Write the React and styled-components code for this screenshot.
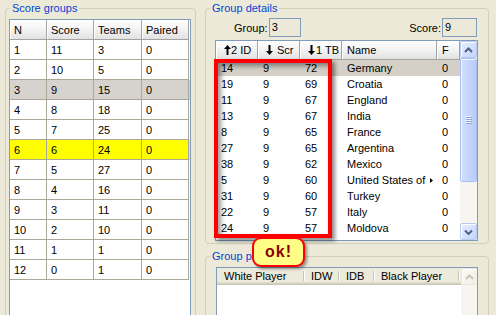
import React from 'react'
import styled, { createGlobalStyle } from 'styled-components'

const GlobalStyle = createGlobalStyle`
  html, body { margin: 0; padding: 0; background: #ECE9D8; }
  body { font-family: "Liberation Sans", Arial, sans-serif; font-size: 11px; color: #000; }
`

const Window = styled.div`
  position: relative;
  width: 496px;
  height: 315px;
  overflow: hidden;
  background: #ECE9D8;
  display: flex;
  align-items: flex-start;
`

const GroupBox = styled.fieldset`
  margin: ${p => p.$mt || 0}px 0 0 0;
  width: ${p => p.$w}px;
  height: ${p => p.$h}px;
  box-sizing: border-box;
  padding: ${p => p.$pad};
  border: 1px solid #D0D0BF;
  border-radius: 4px;
  min-width: 0;
  flex-shrink: 0;
`

const Legend = styled.legend`
  padding: 0 2px;
  margin-left: ${p => p.$offset || 0}px;
  color: #0046D5;
  font-size: 11px;
  line-height: 13px;
`

const LeftColumn = styled.div`
  margin-left: 5px;
`

const RightColumn = styled.div`
  margin-left: 9px;
  width: 284px;
  display: flex;
  flex-direction: column;
`

const Body = styled.div`
  padding: 0 ${p => p.$right}px 0 ${p => p.$left}px;
`

const InfoRow = styled.div`
  display: flex;
  justify-content: space-between;
  align-items: center;
  height: 19px;
  padding: 0 1px 0 19px;
  margin-bottom: 3px;
`

const Field = styled.div`
  display: flex;
  align-items: center;
  gap: 1px;
`

const ValueBox = styled.div`
  width: ${p => p.$w}px;
  height: 19px;
  box-sizing: border-box;
  border: 1px solid #7F9DB9;
  padding-left: 2px;
  line-height: 17px;
`

const ListView = styled.div`
  display: flex;
  width: ${p => p.$w}px;
  height: ${p => p.$h}px;
  box-sizing: border-box;
  border: 1px solid #7F9DB9;
  background: #fff;
  overflow: hidden;
`

const Table = styled.div`
  width: ${p => p.$w}px;
  flex-shrink: 0;
  overflow: hidden;
`

const GridRow = styled.div`
  display: grid;
  grid-template-columns: ${p => p.$cols};
  height: ${p => p.$h}px;
  background: ${p => p.$bg || 'transparent'};
`

const HeadCell = styled.div`
  display: flex;
  align-items: center;
  padding-left: ${p => p.$pad || 4}px;
  box-sizing: border-box;
  background: linear-gradient(#FFFFFF, #F4F4F4 45%, #E2E2E2);
  border-right: 1px solid #A3A3A3;
  border-bottom: 1px solid #A3A3A3;
  box-shadow: inset 1px 1px 0 #FFFFFF;
  white-space: nowrap;
`

const GridCell = styled.div`
  display: flex;
  align-items: center;
  padding-left: 4px;
  box-sizing: border-box;
  border-right: 1px solid #ACA899;
  border-bottom: 1px solid #ACA899;
`

const Cell = styled.div`
  display: flex;
  align-items: center;
  padding-left: 5px;
  white-space: nowrap;
  overflow: hidden;
`

const SortIcon = styled.svg`
  margin-left: 3px;
  margin-right: ${p => p.$gap || 0}px;
`

const MoreMark = styled.svg`
  margin-left: 5px;
`

const FlatHead = styled.div`
  display: grid;
  grid-template-columns: 87px 35px 35px 85px;
  height: 17px;
  background: linear-gradient(#EBEADB 0, #EBEADB 14px, #E2DECD 14px, #E2DECD 15px, #D6D2C2 15px, #D6D2C2 16px, #CBC7B8 16px);
`

const FlatHeadCell = styled.div`
  position: relative;
  padding-left: 7px;
  line-height: 16px;
  white-space: nowrap;
  &::after {
    content: '';
    position: absolute;
    right: 0;
    top: 3px;
    bottom: 4px;
    width: 1px;
    background: #C7C5B2;
    box-shadow: 1px 0 0 #FFFFFF;
  }
`

const ScrollBar = styled.div`
  width: 17px;
  flex-shrink: 0;
  margin-left: ${p => p.$ml || 0}px;
  display: flex;
  flex-direction: column;
  background: #F6F5F0;
`

const ScrollButton = styled.div`
  height: 17px;
  flex: none;
  box-sizing: border-box;
  display: flex;
  align-items: center;
  justify-content: center;
  border-radius: 2px;
  border: 1px solid ${p => (p.$disabled ? '#E8E6DD' : '#B7CBF5')};
  background: ${p => (p.$disabled
    ? 'linear-gradient(135deg, #FBFBF8, #EEEDE5)'
    : 'linear-gradient(135deg, #E6EEFF, #C3D4FC)')};
  box-shadow: inset 1px 1px 0 #FFFFFF;
`

const Thumb = styled.div`
  height: ${p => p.$h}px;
  flex: none;
  box-sizing: border-box;
  display: flex;
  align-items: center;
  justify-content: center;
  border-radius: 2px;
  border: 1px solid #A9BFF3;
  background: linear-gradient(90deg, #D2DEFD, #C2D3FC 60%, #B9CCFA);
  box-shadow: inset 1px 1px 0 #F2F6FF;
`

const Track = styled.div`
  flex: 1;
`

const Marker = styled.div`
  position: absolute;
  left: 214px;
  top: 59px;
  width: 118px;
  height: 179px;
  box-sizing: border-box;
  border: 4px solid #FF0000;
  box-shadow: 3px 3px 4px rgba(0, 0, 0, 0.45), inset 3px 3px 5px rgba(0, 0, 0, 0.4);
`

const Bubble = styled.div`
  position: absolute;
  left: 252px;
  top: 237px;
  width: 53px;
  height: 30px;
  box-sizing: border-box;
  border: 2px solid #FF0000;
  border-radius: 9px;
  background: #FFFF88;
  box-shadow: 2px 2px 3px rgba(0, 0, 0, 0.4);
  display: flex;
  align-items: center;
  justify-content: center;
  color: #8B0000;
  font-weight: bold;
  font-size: 16px;
  letter-spacing: 1px;
`

const scoreGroups = [
  [1, 11, 3, 0], [2, 10, 5, 0], [3, 9, 15, 0], [4, 8, 18, 0],
  [5, 7, 25, 0], [6, 6, 24, 0], [7, 5, 27, 0], [8, 4, 16, 0],
  [9, 3, 11, 0], [10, 2, 10, 0], [11, 1, 1, 0], [12, 0, 1, 0],
]

const teams = [
  [14, 9, 72, 'Germany'], [19, 9, 69, 'Croatia'], [11, 9, 67, 'England'],
  [13, 9, 67, 'India'], [8, 9, 65, 'France'], [27, 9, 65, 'Argentina'],
  [38, 9, 62, 'Mexico'], [5, 9, 60, 'United States of'], [31, 9, 60, 'Turkey'],
  [22, 9, 57, 'Italy'], [24, 9, 57, 'Moldova'], [30, 9, 57, 'Ukraine'],
]

const LEFT_COLS = '37px 47px 48px 47px'
const TEAM_COLS = '42px 42px 42px 95px 23px'

const ArrowUp = () => (
  <SortIcon width="7" height="10" viewBox="0 0 7 10">
    <polygon points="3.5,0 7,4 4.5,4 4.5,10 2.5,10 2.5,4 0,4" fill="#000" />
  </SortIcon>
)

const ArrowDown = ({ gap }) => (
  <SortIcon width="7" height="10" viewBox="0 0 7 10" $gap={gap}>
    <polygon points="3.5,10 7,6 4.5,6 4.5,0 2.5,0 2.5,6 0,6" fill="#000" />
  </SortIcon>
)

const Chevron = ({ down, color }) => (
  <svg width="9" height="6" viewBox="0 0 9 6">
    <path d={down ? 'M1 1.5 L4.5 5 L8 1.5' : 'M1 5 L4.5 1.5 L8 5'} stroke={color} strokeWidth="2" fill="none" />
  </svg>
)

const Grip = () => (
  <svg width="7" height="8" viewBox="0 0 7 8">
    {[0, 2, 4, 6].map(y => (
      <g key={y}>
        <rect x="0" y={y} width="6" height="1" fill="#EEF4FE" />
        <rect x="1" y={y + 1} width="6" height="1" fill="#8CA6E0" />
      </g>
    ))}
  </svg>
)

const App = () => {
  return <>
    <GlobalStyle />
    <Window>
      <LeftColumn>
        <GroupBox $w={191} $h={330} $mt={2} $pad="4px 4px 0 3px">
          <Legend $offset={1}>Score groups</Legend>
          <ListView $w={182} $h={320}>
            <Table $w={180}>
              <GridRow $cols={LEFT_COLS} $h={20}>
                <HeadCell>N</HeadCell>
                <HeadCell>Score</HeadCell>
                <HeadCell>Teams</HeadCell>
                <HeadCell>Paired</HeadCell>
              </GridRow>
              {scoreGroups.map(row => (
                <GridRow
                  key={row[0]}
                  $cols={LEFT_COLS}
                  $h={20}
                  $bg={row[0] === 3 ? '#D6D3CE' : row[0] === 6 ? '#FFFF00' : '#FFFFFF'}
                >
                  {row.map((v, i) => <GridCell key={i}>{v}</GridCell>)}
                </GridRow>
              ))}
            </Table>
          </ListView>
        </GroupBox>
      </LeftColumn>

      <RightColumn>
        <GroupBox $w={284} $h={242} $mt={2} $pad="3px 4px 2px 4px">
          <Legend>Group details</Legend>
          <Body $left={5} $right={6}>
            <InfoRow>
              <Field>Group: <ValueBox $w={32}>3</ValueBox></Field>
              <Field>Score: <ValueBox $w={35}>9</ValueBox></Field>
            </InfoRow>
            <ListView $w={263} $h={201}>
              <Table $w={244}>
                <GridRow $cols={TEAM_COLS} $h={19}>
                  <HeadCell $pad={5}><ArrowUp />2 ID</HeadCell>
                  <HeadCell $pad={5}><ArrowDown gap={4} />Scr</HeadCell>
                  <HeadCell $pad={5}><ArrowDown gap={1} />1 TB</HeadCell>
                  <HeadCell $pad={5}>Name</HeadCell>
                  <HeadCell $pad={5}>F</HeadCell>
                </GridRow>
                {teams.map((t, i) => (
                  <GridRow key={t[0]} $cols={TEAM_COLS} $h={16} $bg={i === 0 ? '#D4D0C8' : undefined}>
                    <Cell>{t[0]}</Cell>
                    <Cell>{t[1]}</Cell>
                    <Cell>{t[2]}</Cell>
                    <Cell>
                      {t[3]}
                      {t[3] === 'United States of' && (
                        <MoreMark width="3" height="5" viewBox="0 0 3 5">
                          <polygon points="0,0 3,2.5 0,5" fill="#000" />
                        </MoreMark>
                      )}
                    </Cell>
                    <Cell>0</Cell>
                  </GridRow>
                ))}
              </Table>
              <ScrollBar $ml={0}>
                <ScrollButton><Chevron color="#4D6185" /></ScrollButton>
                <Thumb $h={124}><Grip /></Thumb>
                <Track />
                <ScrollButton><Chevron down color="#4D6185" /></ScrollButton>
              </ScrollBar>
            </ListView>
          </Body>
        </GroupBox>

        <GroupBox $w={284} $h={80} $mt={6} $pad="4px 4px 0 4px">
          <Legend>Group pairs</Legend>
          <Body $left={6} $right={6}>
            <ListView $w={262} $h={70}>
              <Table $w={244}>
                <FlatHead>
                  <FlatHeadCell>White Player</FlatHeadCell>
                  <FlatHeadCell>IDW</FlatHeadCell>
                  <FlatHeadCell>IDB</FlatHeadCell>
                  <FlatHeadCell>Black Player</FlatHeadCell>
                </FlatHead>
              </Table>
              <ScrollBar>
                <ScrollButton $disabled><Chevron color="#C9C7BA" /></ScrollButton>
                <Track />
              </ScrollBar>
            </ListView>
          </Body>
        </GroupBox>
      </RightColumn>

      <Marker />
      <Bubble>ok!</Bubble>
    </Window>
  </>
}

export default App
